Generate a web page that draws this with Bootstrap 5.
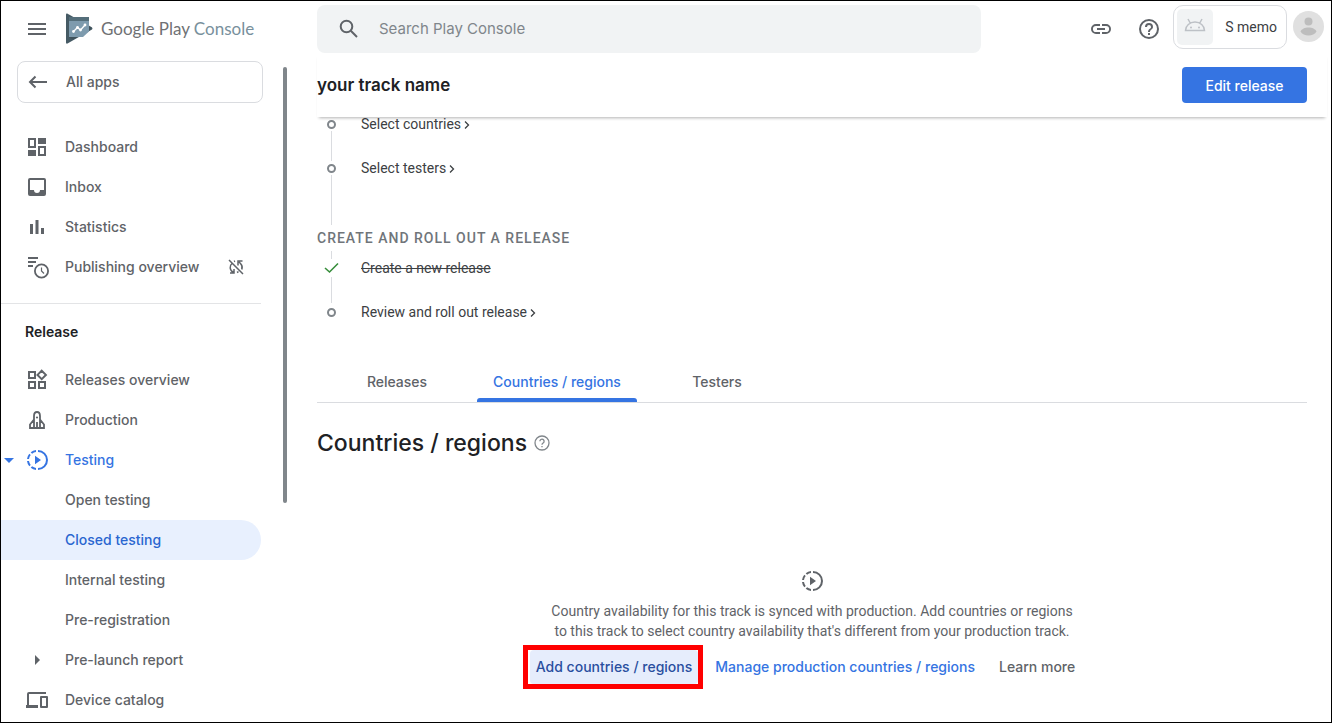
<!DOCTYPE html>
<html lang="en">
<head>
<meta charset="utf-8">
<meta name="viewport" content="width=device-width, initial-scale=1">
<title>your track name | Google Play Console</title>
<link href="https://cdn.jsdelivr.net/npm/bootstrap@5.3.0/dist/css/bootstrap.min.css" rel="stylesheet">
<style>
  :root { --ink: #202124; --grey: #5f6368; --line: #dadce0; --blue: #3574e2; }
  body { font-family: Roboto, "Liberation Sans", sans-serif; font-size: 14px; line-height: 20px; color: #3c4043; }
  a { text-decoration: none; color: inherit; }
  svg { display: block; flex-shrink: 0; }
  .gsans { font-family: Inter, "Liberation Sans", sans-serif; font-weight: 500; }
  .frame { border: 1px solid #000; overflow: hidden; }
  .icon-btn { border: 0; background: none; padding: 0; color: var(--grey); }

  .side { width: 282px; }
  .side-top { height: 56px; padding-left: 24px; }
  .brand { font-family: Lato, "Liberation Sans", sans-serif; font-size: 17px; line-height: 24px; font-weight: 400; color: #6f7174; gap: 8px; margin-left: 16px; }
  .brand b { font-weight: 400; color: #78909c; }
  .all-apps { margin: 4px 20px 24px 16px; height: 42px; border: 1px solid var(--line); border-radius: 8px; padding-left: 8px; gap: 16px; color: var(--grey); }
  .side-nav { width: 260px; color: var(--grey); }
  .side-nav .nav-link { position: relative; height: 40px; padding: 0 16px 0 24px; display: flex; align-items: center; gap: 16px; color: var(--grey); }
  .side-nav .nav-link.sub { padding-left: 64px; }
  .side-nav .nav-link.open { color: var(--blue); }
  .side-nav .nav-link.active { background: #e8f0fe; color: #2a66d0; border-radius: 0 20px 20px 0; }
  .side-nav .caret { position: absolute; left: 3px; top: 18px; }
  .side-rule { height: 1px; background: #e3e4e6; margin-top: 16px; }
  .side-head { height: 56px; padding-left: 24px; color: var(--ink); font-size: 14px; line-height: 56px; margin: 0; font-weight: 600; }
  .thumb { width: 4px; height: 436px; margin-top: 66px; border-radius: 2px; background: #80868b; }

  .page-main { padding-left: 30px; min-width: 0; }
  .topbar { padding: 4px 7px 0 0; }
  .search { flex: 0 1 664px; height: 48px; background: #f1f3f4; border-radius: 8px; padding-left: 20px; gap: 16px; color: var(--grey); }
  .search input { border: 0; background: none; outline: 0; width: 100%; font-size: 15px; font-weight: 400; color: var(--ink); }
  .search input::placeholder { color: #80868b; opacity: 1; }
  .top-icons { height: 48px; }
  .app-chip { height: 44px; border: 1px solid var(--line); border-radius: 10px; padding: 0 9px 0 3px; gap: 12px; background: #fff; color: #3c4043; margin-left: 12px; }
  .app-chip span { width: 36px; height: 36px; background: #f1f3f4; border-radius: 5px; }
  .avatar { margin: 6px 0 0 6px; }
  .titlebar { height: 64px; margin-right: 4px; padding-right: 20px; background: #fff; position: relative; z-index: 1; box-shadow: 0 3px 3px -2px rgba(0,0,0,.3); }
  .titlebar h1 { font-size: 17px; line-height: 24px; font-weight: 600; color: var(--ink); margin: 0; }
  .btn-edit { background: var(--blue); color: #fff; border: 0; border-radius: 4px; height: 36px; width: 125px; padding: 0; font-size: 14px; }
  .btn-edit:hover { background: #2a66d0; color: #fff; }

  .content { padding-right: 24px; }
  .steps { list-style: none; margin: 0; padding: 0; }
  .steps li { display: flex; gap: 22px; }
  .steps a, .steps s { line-height: 14px; }
  .steps s { padding-top: 2px; }
  .rail { width: 15px; margin-left: 7px; display: flex; flex-direction: column; align-items: center; }
  .rail::after { content: ""; flex: 1; width: 1px; background: var(--line); }
  .dot { width: 9px; height: 9px; margin: 3px 0 2px; border: 2px solid #80868b; border-radius: 50%; }
  .step-44 { height: 44px; }
  .step-64 { height: 64px; }
  .step-last { padding-top: 2px; }
  .step-last .rail::after { display: none; }
  .lead-in { width: 1px; height: 8px; margin-left: 14px; background: var(--line); }
  .steps-head { font-size: 14px; line-height: 26px; font-weight: 500; letter-spacing: 1px; color: #70757a; margin: 0; }
  .chev { display: inline-block; vertical-align: -1px; margin-left: 3px; }

  .tabs { border-bottom: 1px solid var(--line); margin-top: 43px; }
  .tabs .nav-link { width: 160px; height: 40px; padding: 0; text-align: center; line-height: 40px; color: var(--grey); position: relative; }
  .tabs .nav-link.active { color: var(--blue); }
  .tabs .nav-link.active::after { content: ""; position: absolute; left: 0; right: 0; bottom: 0; height: 4px; background: var(--blue); border-radius: 3px 3px 0 0; }
  .section-title { font-size: 23px; line-height: 32px; color: var(--ink); margin: 0; }
  .section-row { margin-top: 24px; gap: 7px; }
  .empty { margin-top: 110px; color: var(--grey); }
  .empty p { max-width: 530px; margin: 8px 0 4px; text-align: center; }
  .actions { margin-right: 18px; }
  .mark-box { border: 5px solid #f00; padding-left: 2px; }
  .btn-text { border: 0; border-radius: 4px; background: none; height: 34px; padding: 0 8px; font-size: 14px; line-height: 34px; color: var(--blue); }
  .btn-text.btn-add { background: #e6edfc; color: #2a4f9f; padding: 0 6px; }
</style>
</head>
<body>
<div class="frame d-flex min-vh-100">
  <aside class="side gsans flex-shrink-0">
    <div class="side-top d-flex align-items-center">
      <button class="icon-btn" type="button" aria-label="Menu"><svg width="24" height="24" viewBox="0 0 24 24" fill="currentColor"><path d="M3 6h18v2H3zm0 5h18v2H3zm0 5h18v2H3z"/></svg></button>
      <a href="#" class="brand d-flex align-items-center">
        <svg width="28" height="32" viewBox="0 0 28 32">
          <path d="M1 1.500Q1 .3 2.200.6L27 14.500Q28 15.500 27 16.500L2.500 30.500Q1 31 1 29.500z" fill="#455a64"/>
          <path d="M4 5h20v7.500l3 2-3 3.300L8 26.500 4 24.500z" fill="#37474f" opacity=".45"/>
          <path d="M4 8h20v10.500L18 24H4z" fill="#7e9bae"/><path d="M4 4h20v4H4z" fill="#546e7a"/>
          <path d="M8.500 18.500l4-4 3 2.500 4.500-5" fill="none" stroke="#fff" stroke-width="1.300"/>
          <g fill="#fff"><circle cx="8.500" cy="18.500" r="1.400"/><circle cx="12.500" cy="14.500" r="1.400"/><circle cx="15.500" cy="17" r="1.400"/><circle cx="20" cy="12" r="1.400"/></g>
        </svg>
        <span>Google Play <b>Console</b></span>
      </a>
    </div>
    <a href="#" class="all-apps d-flex align-items-center">
      <svg width="24" height="24" viewBox="0 0 24 24" fill="none" stroke="currentColor" stroke-width="2"><path d="M21 12H4M9.500 6.500 4 12l5.500 5.500"/></svg>All apps</a>
    <nav class="side-nav nav flex-column" aria-label="Sections">
      <a class="nav-link" href="#"><svg width="24" height="24" viewBox="0 0 24 24" fill="none" stroke="currentColor" stroke-width="2"><path d="M4 4h6v8H4zM14 12h6v8h-6z"/><path d="M13 3h8v6h-8zM3 15h8v6H3z" fill="currentColor" stroke="none"/></svg>Dashboard</a>
      <a class="nav-link" href="#"><svg width="24" height="24" viewBox="0 0 24 24" fill="currentColor"><path d="M19 3H5a2 2 0 0 0-2 2v14a2 2 0 0 0 2 2h14a2 2 0 0 0 2-2V5a2 2 0 0 0-2-2zm0 12h-4a3 3 0 0 1-6 0H5V5h14z"/></svg>Inbox</a>
      <a class="nav-link" href="#"><svg width="24" height="24" viewBox="0 0 24 24" fill="currentColor"><path d="M5 9h3v10H5zM10.500 5h3v14h-3zM16 13h3v6h-3z"/></svg>Statistics</a>
      <a class="nav-link" href="#"><svg width="24" height="24" viewBox="0 0 24 24" fill="none" stroke="currentColor" stroke-width="2" overflow="visible"><path d="M3 3h10M3 7h8M3 11h5"/><circle cx="16.500" cy="16" r="6.600" stroke-width="1.800"/><path d="M16.500 12.500V16l2.500 2.500" stroke-width="1.200"/></svg>Publishing overview
        <svg class="ms-auto" width="18" height="18" viewBox="0 0 18 18" fill="none" stroke="currentColor" stroke-width="1.500"><path d="M2 2l14 14M5 5.500Q3 7 3.200 10 3.500 13 6.500 14.500M3 15h4v-4M7 3.500l1-.5M14.800 11.500Q16 8 13.500 5.500L12 4M11 7.500V3h4.500M10 14.500l1.500-.8"/></svg></a>
      <div class="side-rule"></div>
      <h2 class="side-head">Release</h2>
      <a class="nav-link" href="#"><svg width="24" height="24" viewBox="0 0 24 24" fill="none" stroke="currentColor" stroke-width="2"><path d="M4 4h6v6H4zM4 14h6v6H4zM14 14h6v6h-6zM16.700 2.700l4.200 4.200-4.200 4.200-4.200-4.200z"/></svg>Releases overview</a>
      <a class="nav-link" href="#"><svg width="24" height="24" viewBox="0 0 24 24" fill="none" stroke="currentColor" stroke-width="1.800"><path d="M9 20V8c0-2.500 1-4 3-4s3 1.500 3 4v12M9 11.500 5 16.500V20h14v-3.500l-4-5M12 14v6"/><circle cx="12" cy="9.500" r="1.100" fill="currentColor" stroke="none"/></svg>Production</a>
      <a class="nav-link open" href="#"><svg class="caret" width="10" height="5" viewBox="0 0 10 5" fill="currentColor"><path d="M0 0h10L5 5z"/></svg><svg width="24" height="24" viewBox="0 0 24 24" fill="currentColor"><path d="M13 2v2a8 8 0 0 1 0 16v2a10 10 0 0 0 0-20zM11 2a10 10 0 0 0-5.300 2.300l1.400 1.400A8 8 0 0 1 11 4zM4.300 5.700A10 10 0 0 0 2 11h2a8 8 0 0 1 1.700-3.900zM2 13a10 10 0 0 0 2.300 5.300l1.400-1.400A8 8 0 0 1 4 13zM5.700 19.700A10 10 0 0 0 11 22v-2a8 8 0 0 1-3.900-1.700zM10 7.800v8.400l6-4.200z"/></svg>Testing</a>
      <a class="nav-link sub" href="#">Open testing</a>
      <a class="nav-link sub active" href="#" aria-current="page">Closed testing</a>
      <a class="nav-link sub" href="#">Internal testing</a>
      <a class="nav-link sub" href="#">Pre-registration</a>
      <a class="nav-link" href="#"><svg width="24" height="24" viewBox="0 0 24 24" fill="currentColor"><path d="M10 7v10l5-5z"/></svg>Pre-launch report</a>
      <a class="nav-link" href="#"><svg width="24" height="24" viewBox="0 0 24 24" fill="currentColor"><path d="M4 6h17V4H4a2 2 0 0 0-2 2v11H1v3h12v-3H4zm18 2h-6a1 1 0 0 0-1 1v10a1 1 0 0 0 1 1h6a1 1 0 0 0 1-1V9a1 1 0 0 0-1-1zm-1 10h-4v-8h4z"/></svg>Device catalog</a>
    </nav>
  </aside>
  <div class="thumb flex-shrink-0"></div>

  <main class="page-main flex-grow-1">
    <header class="topbar d-flex align-items-start">
      <label class="search gsans d-flex align-items-center">
        <svg width="24" height="24" viewBox="0 0 24 24" fill="none" stroke="currentColor" stroke-width="2"><circle cx="9.500" cy="9.500" r="5.800"/><path d="M13.800 13.800l6.200 6.200"/></svg>
        <input type="search" placeholder="Search Play Console" aria-label="Search Play Console">
      </label>
      <div class="top-icons d-flex align-items-center gap-4 ms-auto">
        <button class="icon-btn" type="button" aria-label="Copy link"><svg width="24" height="24" viewBox="0 0 24 24" fill="currentColor"><path d="M3.900 12A3.100 3.100 0 0 1 7 8.900h4V7H7a5 5 0 0 0 0 10h4v-1.900H7A3.100 3.100 0 0 1 3.900 12zM8 13h8v-2H8zm9-6h-4v1.900h4a3.100 3.100 0 0 1 0 6.200h-4V17h4a5 5 0 0 0 0-10z"/></svg></button>
        <button class="icon-btn" type="button" aria-label="Help"><svg width="24" height="24" viewBox="0 0 24 24" fill="currentColor"><path d="M11 18h2v-2h-2zm1-16a10 10 0 1 0 0 20 10 10 0 0 0 0-20zm0 18a8 8 0 1 1 0-16 8 8 0 0 1 0 16zm0-14a4 4 0 0 0-4 4h2a2 2 0 1 1 4 0c0 2-3 1.750-3 5h2c0-2.250 3-2.500 3-5a4 4 0 0 0-4-4z"/></svg></button>
      </div>
      <button type="button" class="app-chip d-flex align-items-center">
        <span class="d-flex align-items-center justify-content-center"><svg width="22" height="18" viewBox="0 0 22 18" fill="none" stroke="#bdc1c6" stroke-width="1.500"><path d="M1.500 12.500a9.500 8.500 0 0 1 19 0zM6.500 5.500 4 1M15.500 5.500 18 1"/><g fill="#bdc1c6" stroke="none"><circle cx="7" cy="9.500" r="1"/><circle cx="15" cy="9.500" r="1"/></g></svg></span>S memo</button>
      <button class="icon-btn avatar" type="button" aria-label="Account"><svg width="31" height="31" viewBox="0 0 31 31"><circle cx="15.500" cy="15.500" r="15.500" fill="#e0e0e0"/><g fill="#bdbdbd"><circle cx="15.500" cy="10.500" r="4"/><path d="M7.500 20.500c1-2.500 4.500-4 8-4s7 1.500 8 4c-1.500 2.500-4.500 4-8 4s-6.500-1.500-8-4z"/></g></svg></button>
    </header>
    <div class="titlebar gsans d-flex align-items-center justify-content-between">
      <h1>your track name</h1>
      <button type="button" class="btn btn-edit gsans">Edit release</button>
    </div>

    <div class="content">
      <ul class="steps">
        <li class="step-44"><div class="rail"><div class="dot"></div></div><a href="#">Select countries<svg class="chev" width="6" height="10" viewBox="0 0 6 10" fill="none" stroke="currentColor" stroke-width="1.300"><path d="M1 1.500 4.500 5 1 8.500"/></svg></a></li>
        <li class="step-64"><div class="rail"><div class="dot"></div></div><a href="#">Select testers<svg class="chev" width="6" height="10" viewBox="0 0 6 10" fill="none" stroke="currentColor" stroke-width="1.300"><path d="M1 1.500 4.500 5 1 8.500"/></svg></a></li>
      </ul>
      <h3 class="steps-head">CREATE AND ROLL OUT A RELEASE</h3>
      <div class="lead-in"></div>
      <ul class="steps">
        <li class="step-44"><div class="rail"><svg width="15" height="18" viewBox="0 0 15 18" fill="none" stroke="#388e3c" stroke-width="1.600"><path d="M1 9l4.500 4L14 4.500"/></svg></div><s>Create a new release</s></li>
        <li class="step-last"><div class="rail"><div class="dot"></div></div><a href="#">Review and roll out release<svg class="chev" width="6" height="10" viewBox="0 0 6 10" fill="none" stroke="currentColor" stroke-width="1.300"><path d="M1 1.500 4.500 5 1 8.500"/></svg></a></li>
      </ul>

      <nav class="tabs nav gsans" aria-label="Track">
        <a class="nav-link" href="#">Releases</a>
        <a class="nav-link active" href="#">Countries / regions</a>
        <a class="nav-link" href="#">Testers</a>
      </nav>
      <div class="section-row d-flex align-items-center">
        <h2 class="section-title gsans">Countries / regions</h2>
        <button class="icon-btn" type="button" aria-label="About countries and regions"><svg width="16" height="16" viewBox="0 0 16 16" fill="none" stroke="#80868b" stroke-width="1.300"><circle cx="8" cy="8" r="7"/><path d="M5.900 6.300a2.100 2.100 0 1 1 3.300 1.700C8.500 8.500 8 8.800 8 9.800M8 10.900v1.300"/></svg></button>
      </div>

      <div class="empty d-flex flex-column align-items-center">
        <svg width="24" height="24" viewBox="0 0 24 24" fill="currentColor"><path d="M13 2v2a8 8 0 0 1 0 16v2a10 10 0 0 0 0-20zM11 2a10 10 0 0 0-5.300 2.300l1.400 1.400A8 8 0 0 1 11 4zM4.300 5.700A10 10 0 0 0 2 11h2a8 8 0 0 1 1.700-3.900zM2 13a10 10 0 0 0 2.300 5.300l1.400-1.400A8 8 0 0 1 4 13zM5.700 19.700A10 10 0 0 0 11 22v-2a8 8 0 0 1-3.900-1.700zM10 7.800v8.400l6-4.200z"/></svg>
        <p>Country availability for this track is synced with production. Add countries or regions to this track to select country availability that's different from your production track.</p>
        <div class="actions gsans d-flex align-items-center">
          <div class="mark-box"><button type="button" class="btn-text btn-add gsans">Add countries / regions</button></div>
          <button type="button" class="btn-text gsans ms-1">Manage production countries / regions</button>
          <a href="#" class="btn-text text-reset ms-2">Learn more</a>
        </div>
      </div>
    </div>
  </main>
</div>
<script src="https://cdn.jsdelivr.net/npm/bootstrap@5.3.0/dist/js/bootstrap.bundle.min.js"></script>
</body>
</html>
